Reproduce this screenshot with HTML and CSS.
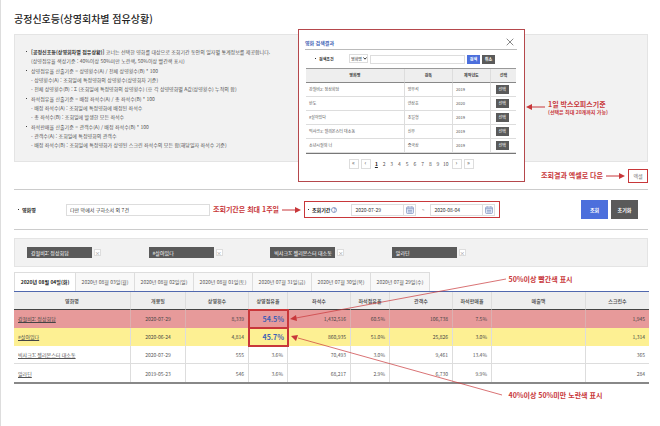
FILE: index.html
```html
<!DOCTYPE html>
<html lang="ko">
<head>
  <meta charset="UTF-8">
  <title>공정신호등(상영회차별 점유상황)</title>
  <link rel="stylesheet" href="styles.css">
</head>
<body>
  <main class="page">
    <h1>공정신호등(상영회차별 점유상황)</h1>

    <section class="info">
      <ul class="info-list">
        <li><strong>[공정신호등(상영회차별 점유상황)]</strong> 코너는 선택한 영화를 대상으로 조회기간 동안의 일자별 통계정보를 제공합니다.
          <p>(상영점유율 색상기준 : 40%이상 50%미만 노란색, 50%이상 빨간색 표시)</p>
        </li>
        <li>상영점유율 산출기준 = 상영횟수(A) / 전체 상영횟수(B) * 100
          <p>- 상영횟수(A) : 조회일에 특정영화의 상영횟수(상영회차 기준)</p>
          <p>- 전체 상영횟수(B) : Σ (조회일에 특정영화의 상영횟수) (※ 각 상영영화별 A값(상영횟수) 누적의 합)</p>
        </li>
        <li>좌석점유율 산출기준 = 배정 좌석수(A) / 총 좌석수(B) * 100
          <p>- 배정 좌석수(A) : 조회일에 특정영화에 배정된 좌석수</p>
          <p>- 총 좌석수(B) : 조회일에 발생한 모든 좌석수</p>
        </li>
        <li>좌석판매율 산출기준 = 관객수(A) / 배정 좌석수(B) * 100
          <p>- 관객수(A) : 조회일에 특정영화의 관객수</p>
          <p>- 배정 좌석수(B) : 조회일에 특정영화가 상영된 스크린 좌석수의 모든 합(해당일자 좌석수 기준)</p>
        </li>
      </ul>

      <div class="modal">
        <div class="modal-head">
          <h2>영화 검색결과</h2>
          <button type="button" class="close" aria-label="닫기">
            <svg viewBox="0 0 8 8"><path d="M0.7 0.7L7.3 7.3M7.3 0.7L0.7 7.3"/></svg>
          </button>
        </div>
        <form class="modal-search">
          <label for="keyword" class="dot">검색조건</label>
          <span class="select">
            <select id="field" aria-label="검색 구분"><option>영화명</option></select>
            <svg viewBox="0 0 4 3"><path d="M0.5 0.5L2 2.2L3.5 0.5"/></svg>
          </span>
          <input type="text" id="keyword">
          <button type="button" class="blue">검색</button>
          <button type="button" class="dark">취소</button>
        </form>
        <table class="results">
          <colgroup><col class="r-title"><col class="r-director"><col class="r-year"><col></colgroup>
          <thead>
            <tr><th>영화명</th><th>감독</th><th>제작년도</th><th>선택</th></tr>
          </thead>
          <tbody>
            <tr><td>강철비2: 정상회담</td><td>양우석</td><td>2019</td><td><button type="button" class="dark">선택</button></td></tr>
            <tr><td>반도</td><td>연상호</td><td>2020</td><td><button type="button" class="dark">선택</button></td></tr>
            <tr><td>#살아있다</td><td>조일형</td><td>2019</td><td><button type="button" class="dark">선택</button></td></tr>
            <tr><td>빅샤크3: 젤리몬스터 대소동</td><td>신우</td><td>2019</td><td><button type="button" class="dark">선택</button></td></tr>
            <tr><td>소년시절의 너</td><td>증국상</td><td>2019</td><td><button type="button" class="dark">선택</button></td></tr>
          </tbody>
        </table>
        <nav class="pages">
          <a href="#" class="box">«</a>
          <a href="#" class="box">‹</a>
          <span class="numbers">
            <a href="#" class="current">1</a><a href="#">2</a><a href="#">3</a><a href="#">4</a><a href="#">5</a><a href="#">6</a><a href="#">7</a><a href="#">8</a><a href="#">9</a><a href="#">10</a>
          </span>
          <a href="#" class="box">›</a>
          <a href="#" class="box">»</a>
        </nav>
      </div>

      <div class="note note-modal">
        <svg class="arrow" viewBox="0 0 19 6"><path class="line" d="M5 3H19"/><path class="head" d="M0 3L6 0V6Z"/></svg>
        <p>1일 박스오피스기준<small>(선택은 최대 20개까지 가능)</small></p>
      </div>
    </section>

    <div class="export">
      <span class="note">조회결과 엑셀로 다운</span>
      <svg class="arrow" viewBox="0 0 19 6"><path class="line" d="M0 3H14"/><path class="head" d="M19 3L13 0V6Z"/></svg>
      <button type="button">엑셀</button>
    </div>

    <form class="search">
      <label for="movie" class="dot">영화명</label>
      <input type="text" id="movie" value="다만 악에서 구하소서 외 7건">
      <span class="note">조회기간은 최대 1주일</span>
      <svg class="arrow" viewBox="0 0 19 6"><path class="line" d="M0 3H14"/><path class="head" d="M19 3L13 0V6Z"/></svg>
      <div class="period">
        <label for="from" class="dot">조회기간</label>
        <span class="help">?</span>
        <input type="text" id="from" value="2020-07-29">
        <button type="button" class="calendar" aria-label="시작일 선택">
          <svg viewBox="0 0 8 8"><rect x="0.5" y="1" width="7" height="6.5" rx="1"/><path d="M0.5 2.7H7.5M2 4.4H6M2 5.9H6M2.2 0.3V1.5M5.8 0.3V1.5"/></svg>
        </button>
        <span class="tilde">~</span>
        <input type="text" id="to" value="2020-08-04" aria-label="종료일">
        <button type="button" class="calendar" aria-label="종료일 선택">
          <svg viewBox="0 0 8 8"><rect x="0.5" y="1" width="7" height="6.5" rx="1"/><path d="M0.5 2.7H7.5M2 4.4H6M2 5.9H6M2.2 0.3V1.5M5.8 0.3V1.5"/></svg>
        </button>
      </div>
      <div class="actions">
        <button type="button" class="blue">조회</button>
        <button type="button" class="dark">초기화</button>
      </div>
    </form>

    <ul class="chips">
      <li><span>강철비2: 정상회담</span><button type="button" aria-label="삭제">×</button></li>
      <li><span>#살아있다</span><button type="button" aria-label="삭제">×</button></li>
      <li><span>빅샤크3: 젤리몬스터 대소동</span><button type="button" aria-label="삭제">×</button></li>
      <li><span>알라딘</span><button type="button" aria-label="삭제">×</button></li>
    </ul>

    <section class="daily">
      <nav class="tabs">
        <a href="#" class="active">2020년 08월 04일(화)</a>
        <a href="#">2020년 08월 03일(월)</a>
        <a href="#">2020년 08월 02일(일)</a>
        <a href="#">2020년 08월 01일(토)</a>
        <a href="#">2020년 07월 31일(금)</a>
        <a href="#">2020년 07월 30일(목)</a>
        <a href="#">2020년 07월 29일(수)</a>
      </nav>
      <table class="stats">
        <colgroup>
          <col class="w-title"><col class="w-date"><col class="w-wide"><col class="w-rate"><col class="w-wide">
          <col class="w-rate"><col class="w-wide"><col class="w-rate"><col class="w-sales"><col class="w-wide">
        </colgroup>
        <thead>
          <tr><th>영화명</th><th>개봉일</th><th>상영횟수</th><th>상영점유율</th><th>좌석수</th><th>좌석점유율</th><th>관객수</th><th>좌석판매율</th><th>매출액</th><th>스크린수</th></tr>
        </thead>
        <tbody>
          <tr class="red"><td><a href="#">강철비2: 정상회담</a></td><td>2020-07-29</td><td>8,339</td><td class="marked">54.5%</td><td>1,432,516</td><td>60.5%</td><td>106,738</td><td>7.5%</td><td></td><td>1,945</td></tr>
          <tr class="yellow"><td><a href="#">#살아있다</a></td><td>2020-06-24</td><td>4,814</td><td class="marked">45.7%</td><td>860,935</td><td>51.0%</td><td>25,826</td><td>3.0%</td><td></td><td>1,314</td></tr>
          <tr><td><a href="#">빅샤크3: 젤리몬스터 대소동</a></td><td>2020-07-29</td><td>555</td><td>3.6%</td><td>70,493</td><td>3.0%</td><td>9,461</td><td>13.4%</td><td></td><td>365</td></tr>
          <tr><td><a href="#">알라딘</a></td><td>2019-05-23</td><td>546</td><td>3.6%</td><td>68,217</td><td>2.9%</td><td>6,730</td><td>9.9%</td><td></td><td>284</td></tr>
        </tbody>
      </table>
      <svg class="pointers" viewBox="0 0 634 130" preserveAspectRatio="none">
        <path class="line" d="M282 46L492 7M284 66L488 123"/>
        <path class="head" d="M276 47L282 43L283 49ZM277 64L284 63L282 69Z"/>
      </svg>
      <p class="note note-red">50%이상 빨간색 표시</p>
      <p class="note note-yellow">40%이상 50%미만 노란색 표시</p>
    </section>
  </main>
</body>
</html>
```

FILE: styles.css
```css
* {
  box-sizing: border-box;
}

body {
  margin: 0;
  background: #fff;
  color: #555;
  font-family: "Noto Sans CJK KR", "Noto Sans", sans-serif;
  font-size: 5px;
  line-height: 9px;
}

h1, h2, p, ul {
  margin: 0;
  padding: 0;
}

ul {
  list-style: none;
}

button, input, select {
  margin: 0;
  padding: 0;
  border: 1px solid #ddd;
  border-radius: 0;
  background: #fff;
  color: #333;
  font: inherit;
}

a {
  color: inherit;
}

svg {
  display: block;
}

.page {
  min-height: 100vh;
  padding: 12px 12px 0 13px;
  border-left: 1px solid #ddd;
}

h1 {
  color: #222;
  font-size: 10px;
  font-weight: 500;
  line-height: 14px;
}

.blue {
  border: 0;
  background: #4c6fdc;
  color: #fff;
}

.dark {
  border: 0;
  background: #5a5a5a;
  color: #fff;
}

.dot::before {
  content: "";
  display: inline-block;
  width: 1px;
  height: 1px;
  margin-right: 3px;
  background: #333;
  vertical-align: 2px;
}

/* red annotations */
.note {
  color: #c8373a;
  font-size: 7px;
  font-weight: bold;
  white-space: nowrap;
}

.note small {
  display: block;
  font-size: 5px;
  line-height: 5px;
}

.arrow {
  width: 19px;
  height: 6px;
}

.line {
  fill: none;
  stroke: #c8373a;
}

.head {
  fill: #c8373a;
}

/* guide box */
.info {
  position: relative;
  margin-top: 8px;
  padding: 12px 11px;
  border: 1px solid #e4e4e4;
  background: #f2f2f2;
}

.info-list li {
  position: relative;
  padding-left: 5px;
}

.info-list li + li {
  margin-top: 1px;
}

.info-list li::before {
  content: "";
  position: absolute;
  top: 4px;
  left: 0;
  width: 1px;
  height: 1px;
  background: #444;
}

.info-list strong {
  color: #333;
}

.note-modal {
  position: absolute;
  top: 65px;
  left: 511px;
  display: flex;
  align-items: center;
  gap: 3px;
}

/* movie search popup */
.modal {
  position: absolute;
  top: -6px;
  left: 283px;
  width: 227px;
  padding: 5px 7px 12px 6px;
  border: 1px solid #b5484c;
  background: #fff;
  font-size: 4px;
}

.modal-head {
  display: flex;
  justify-content: space-between;
  align-items: center;
  height: 15px;
  padding-right: 3px;
  border-bottom: 1px solid #bbb;
}

.modal-head h2 {
  color: #3f5fb5;
  font-size: 5px;
}

.close {
  border: 0;
}

.close svg {
  width: 8px;
  height: 8px;
  fill: none;
  stroke: #555;
  stroke-width: 0.7;
}

.modal-search {
  display: flex;
  align-items: center;
  gap: 2px;
  height: 18px;
  padding: 0 22px 0 10px;
}

.modal-search label {
  width: 32px;
  color: #333;
  font-weight: bold;
}

.select {
  position: relative;
}

.select select {
  width: 19px;
  height: 9px;
  padding-left: 1px;
  appearance: none;
}

.select svg {
  position: absolute;
  top: 3px;
  right: 1px;
  width: 4px;
  height: 3px;
  fill: none;
  stroke: #333;
}

.modal-search input {
  flex: 1;
  min-width: 0;
  height: 9px;
}

.modal-search button {
  width: 13px;
  height: 9px;
  font-weight: bold;
}

table {
  width: 100%;
  border-collapse: separate;
  border-spacing: 0;
  table-layout: fixed;
}

th, td {
  padding: 0 3px;
  border-right: 1px solid #ddd;
  border-bottom: 1px solid #ddd;
}

th:last-child, td:last-child {
  border-right: 0;
}

th {
  background: #eee;
  color: #444;
  font-weight: bold;
}

.results {
  margin-left: 1px;
  width: calc(100% - 2px);
  border-top: 1px solid #999;
  border-bottom: 1px solid #777;
}

.results th {
  height: 14px;
  border-bottom-color: #888;
}

.results td {
  height: 14px;
}

.results .dark {
  display: block;
  width: 13px;
  height: 9px;
  margin-left: 2px;
}

.r-title {
  width: 47%;
}

.r-director {
  width: 23%;
}

.r-year {
  width: 18%;
}

.pages {
  display: flex;
  justify-content: center;
  gap: 2px;
  margin-top: 5px;
}

.pages a {
  text-decoration: none;
}

.pages .box {
  width: 10px;
  height: 10px;
  border: 1px solid #ddd;
  font-size: 6px;
  line-height: 6px;
  text-align: center;
}

.numbers {
  display: flex;
  width: 77px;
  font-size: 5px;
}

.numbers a {
  flex: 1;
  text-align: center;
}

.numbers .current {
  color: #222;
  font-weight: bold;
  text-decoration: underline;
}

/* excel button row */
.export {
  display: flex;
  justify-content: flex-end;
  align-items: center;
  gap: 3px;
  height: 27px;
}

.export button {
  width: 20px;
  height: 14px;
  border-color: #c8373a;
  color: #777;
}

/* search conditions */
.search {
  display: flex;
  align-items: center;
  gap: 3px;
  height: 41px;
  padding: 0 10px 0 4px;
  border-top: 1px solid #ccc;
  border-bottom: 1px solid #ccc;
}

.search label {
  color: #222;
  font-weight: bold;
}

.search > label {
  width: 45px;
}

.search input {
  height: 12px;
  padding: 0 3px;
}

#movie {
  width: 144px;
}

.period {
  display: flex;
  align-items: center;
  height: 17px;
  padding: 0 4px 0 3px;
  border: 1px solid #c8373a;
}

.period input {
  width: 53px;
}

.help {
  width: 6px;
  height: 6px;
  margin: 0 14px 0 1px;
  border: 1px solid #8fa0c4;
  border-radius: 50%;
  color: #3f5fb5;
  line-height: 4px;
  text-align: center;
}

.calendar {
  width: 12px;
  height: 12px;
  border-left: 0;
}

.calendar svg {
  width: 8px;
  height: 8px;
  margin: auto;
  fill: #dfe7f7;
  stroke: #7f93bf;
  stroke-width: 0.7;
}

.tilde {
  width: 14px;
  text-align: center;
}

.actions {
  display: flex;
  gap: 3px;
  margin-left: auto;
}

.actions button {
  width: 27px;
  height: 19px;
  font-weight: bold;
}

/* selected movies */
.chips {
  display: grid;
  grid-template-columns: repeat(5, 1fr);
  align-items: center;
  height: 29px;
  margin-top: 8px;
  padding: 0 12px;
  border: 1px solid #e4e4e4;
  background: #f2f2f2;
}

.chips li {
  display: flex;
  align-items: center;
  gap: 2px;
}

.chips span {
  width: 65px;
  height: 11px;
  padding: 0 4px;
  background: #5a5a5a;
  color: #fff;
  line-height: 11px;
  white-space: nowrap;
}

.chips button {
  width: 7px;
  height: 7px;
  color: #777;
  line-height: 5px;
}

/* daily table */
.daily {
  position: relative;
  margin-top: 5px;
}

.tabs {
  display: flex;
}

.tabs a {
  width: 59px;
  height: 19px;
  border: 1px solid #ddd;
  border-left: 0;
  border-bottom: 0;
  background: #f8f8f8;
  line-height: 18px;
  text-align: center;
  text-decoration: none;
  white-space: nowrap;
}

.tabs .active {
  width: 62px;
  border-left: 1px solid #ddd;
  background: #fff;
  color: #222;
  font-weight: bold;
}

.stats {
  border-top: 1px solid #5068ae;
  border-bottom: 2px solid #888;
}

.stats th {
  height: 18px;
  border-bottom-color: #444;
  font-weight: 500;
}

.stats td {
  height: 18px;
  padding: 0 4px;
  text-align: right;
}

.stats td:nth-child(1) {
  text-align: left;
}

.stats td:nth-child(2) {
  text-align: center;
}

.stats tbody tr:last-child td {
  border-bottom: 0;
}

.red td {
  border-color: #e79a9a;
  border-right-color: #dcb0b0;
  background: #e79a9a;
  color: #444;
}

.yellow td {
  border-bottom-color: #fdf093;
  background: #fdf093;
  color: #444;
}

.stats .marked {
  border: 0;
  outline: 1px solid #c8373a;
  box-shadow: 0 0 0 1px #c8373a inset;
  color: #3f5fb5;
  font-size: 7px;
  font-weight: bold;
}

.w-title {
  width: 117px;
}

.w-date {
  width: 55px;
}

.w-wide {
  width: 63px;
}

.w-rate {
  width: 39px;
}

.w-sales {
  width: 94px;
}

.pointers {
  position: absolute;
  top: 0;
  left: 0;
  width: 100%;
  height: 130px;
  pointer-events: none;
}

.pointers .line {
  stroke-width: 0.7;
}

.note-red {
  position: absolute;
  top: 3px;
  left: 78%;
}

.note-yellow {
  position: absolute;
  top: 119px;
  left: 78%;
}
```
